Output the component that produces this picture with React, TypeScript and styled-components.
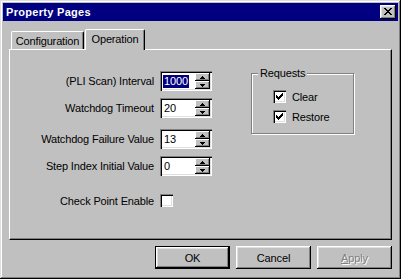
import React from "react";
import styled, { createGlobalStyle } from "styled-components";

const Global = createGlobalStyle`
  html, body { margin: 0; padding: 0; background: #c0c0c0; }
  body { font-family: "Liberation Sans", Arial, sans-serif; font-size: 11px; color: #000; letter-spacing: -0.15px; }
  * { box-sizing: border-box; }
`;

const Window = styled.div`
  width: 401px;
  height: 279px;
  background: #c0c0c0;
  padding: 3px;
  display: flex;
  flex-direction: column;
  box-shadow: inset -1px -1px #000, inset 1px 1px #dfdfdf, inset -2px -2px #808080, inset 2px 2px #fff;
`;

const TitleBar = styled.div`
  height: 18px;
  background: #000080;
  display: flex;
  align-items: center;
  justify-content: space-between;
  padding: 0 2px 0 3px;
`;

const TitleText = styled.span`
  color: #fff;
  font-weight: bold;
  font-size: 11px;
  letter-spacing: 0.3px;
`;

const CloseButton = styled.div`
  width: 16px;
  height: 14px;
  background: #c0c0c0;
  display: flex;
  align-items: center;
  justify-content: center;
  box-shadow: inset -1px -1px #000, inset 1px 1px #fff, inset -2px -2px #808080, inset 2px 2px #dfdfdf;
  padding-bottom: 1px;
`;

const Content = styled.div`
  flex: 1;
  display: flex;
  flex-direction: column;
  padding: 0 6px;
`;

const TabStrip = styled.div`
  display: flex;
  align-items: flex-end;
  height: 20px;
  margin-top: 8px;
  padding-left: 2px;
`;

const Tab = styled.div<{ $active?: boolean; $w: number }>`
  width: ${(p) => p.$w}px;
  height: ${(p) => (p.$active ? 21 : 18)}px;
  margin-bottom: ${(p) => (p.$active ? -1 : 0)}px;
  margin-left: ${(p) => (p.$active ? 1 : 0)}px;
  position: relative;
  z-index: ${(p) => (p.$active ? 1 : 0)};
  background: #c0c0c0;
  border-left: 1px solid #fff;
  border-top: 1px solid #fff;
  border-right: 1px solid #000;
  border-top-left-radius: 2px;
  border-top-right-radius: 2px;
  box-shadow: inset -1px 0 #808080;
  display: flex;
  align-items: ${(p) => (p.$active ? "flex-start" : "center")};
  padding-top: ${(p) => (p.$active ? 3 : 0)}px;
  justify-content: center;
  white-space: nowrap;
`;

const Panel = styled.div`
  height: 191px;
  background: #c0c0c0;
  border-top: 1px solid #fff;
  border-left: 1px solid #fff;
  border-right: 1px solid #000;
  border-bottom: 1px solid #000;
  box-shadow: inset -1px -1px #808080;
  display: flex;
`;

const FormColumn = styled.div`
  width: 241px;
  padding-top: 21px;
  display: flex;
  flex-direction: column;
`;

const FieldRow = styled.div<{ $top: number; $h: number }>`
  display: grid;
  grid-template-columns: 144px auto;
  column-gap: 6px;
  align-items: center;
  height: ${(p) => p.$h}px;
  margin-top: ${(p) => p.$top}px;
`;

const Label = styled.span`
  text-align: right;
  white-space: nowrap;
`;

const SpinEdit = styled.div`
  width: 52px;
  height: 20px;
  background: #fff;
  display: flex;
  align-items: center;
  padding: 2px 1px 2px 3px;
  box-shadow: inset 1px 1px #808080, inset 2px 2px #000, inset -1px -1px #fff, inset -2px -2px #dfdfdf;
`;

const EditValue = styled.span<{ $selected?: boolean }>`
  flex: 1;
  display: flex;
  align-items: center;
  & > span {
    padding: 0 1px;
    line-height: 13px;
    background: ${(p) => (p.$selected ? "#000080" : "transparent")};
    color: ${(p) => (p.$selected ? "#fff" : "#000")};
  }
`;

const SpinButtons = styled.div`
  width: 15px;
  height: 16px;
  margin-right: 1px;
  display: flex;
  flex-direction: column;
`;

const SpinButton = styled.div`
  flex: 1;
  background: #c0c0c0;
  display: flex;
  align-items: center;
  justify-content: center;
  box-shadow: inset -1px -1px #000, inset 1px 1px #fff, inset -2px -2px #808080;
`;

const CheckBox = styled.div`
  width: 13px;
  height: 13px;
  background: #fff;
  display: flex;
  align-items: center;
  justify-content: center;
  box-shadow: inset 1px 1px #808080, inset 2px 2px #000, inset -1px -1px #fff, inset -2px -2px #dfdfdf;
`;

const GroupBox = styled.div`
  position: relative;
  width: 103px;
  height: 61px;
  margin-top: 23px;
  border: 1px solid #808080;
  box-shadow: inset 1px 1px #fff, 1px 1px #fff;
  padding: 16px 0 0 21px;
  display: flex;
  flex-direction: column;
  gap: 7px;
`;

const Legend = styled.span`
  position: absolute;
  top: -7px;
  left: 6px;
  padding: 0 2px;
  line-height: 13px;
  background: #c0c0c0;
`;

const CheckRow = styled.div`
  display: flex;
  align-items: center;
  gap: 6px;
  height: 13px;
`;

const ButtonRow = styled.div`
  display: flex;
  justify-content: flex-end;
  gap: 6px;
  margin-top: 6px;
`;

const Button = styled.div<{ $default?: boolean; $disabled?: boolean }>`
  width: 75px;
  height: 23px;
  background: #c0c0c0;
  display: flex;
  align-items: center;
  justify-content: center;
  color: ${(p) => (p.$disabled ? "#808080" : "#000")};
  text-shadow: ${(p) => (p.$disabled ? "1px 1px #fff" : "none")};
  box-shadow: ${(p) =>
    p.$default
      ? "inset 0 0 0 1px #000, inset -2px -2px #000, inset 2px 2px #fff, inset -3px -3px #808080, inset 3px 3px #dfdfdf"
      : "inset -1px -1px #000, inset 1px 1px #fff, inset -2px -2px #808080, inset 2px 2px #dfdfdf"};
`;

const CloseGlyph = () => (
  <svg width="8" height="7" viewBox="0 0 8 7" shapeRendering="crispEdges">
    <rect x="0" y="0" width="2" height="1" fill="#000" />
    <rect x="6" y="0" width="2" height="1" fill="#000" />
    <rect x="1" y="1" width="2" height="1" fill="#000" />
    <rect x="5" y="1" width="2" height="1" fill="#000" />
    <rect x="2" y="2" width="4" height="1" fill="#000" />
    <rect x="3" y="3" width="2" height="1" fill="#000" />
    <rect x="2" y="4" width="4" height="1" fill="#000" />
    <rect x="1" y="5" width="2" height="1" fill="#000" />
    <rect x="5" y="5" width="2" height="1" fill="#000" />
    <rect x="0" y="6" width="2" height="1" fill="#000" />
    <rect x="6" y="6" width="2" height="1" fill="#000" />
  </svg>
);

const Arrow = ({ up }: { up?: boolean }) => (
  <svg width="5" height="3" viewBox="0 0 5 3" shapeRendering="crispEdges">
    {up ? (
      <>
        <rect x="2" y="0" width="1" height="1" fill="#000" />
        <rect x="1" y="1" width="3" height="1" fill="#000" />
        <rect x="0" y="2" width="5" height="1" fill="#000" />
      </>
    ) : (
      <>
        <rect x="0" y="0" width="5" height="1" fill="#000" />
        <rect x="1" y="1" width="3" height="1" fill="#000" />
        <rect x="2" y="2" width="1" height="1" fill="#000" />
      </>
    )}
  </svg>
);

const CheckMark = () => (
  <svg width="7" height="7" viewBox="0 0 7 7" shapeRendering="crispEdges">
    <rect x="6" y="0" width="1" height="1" fill="#000" />
    <rect x="5" y="1" width="2" height="1" fill="#000" />
    <rect x="0" y="2" width="1" height="1" fill="#000" />
    <rect x="4" y="2" width="3" height="1" fill="#000" />
    <rect x="0" y="3" width="2" height="1" fill="#000" />
    <rect x="3" y="3" width="3" height="1" fill="#000" />
    <rect x="0" y="4" width="5" height="1" fill="#000" />
    <rect x="1" y="5" width="3" height="1" fill="#000" />
    <rect x="2" y="6" width="1" height="1" fill="#000" />
  </svg>
);

const Spin = ({ value, selected }: { value: string; selected?: boolean }) => (
  <SpinEdit>
    <EditValue $selected={selected}>
      <span>{value}</span>
    </EditValue>
    <SpinButtons>
      <SpinButton>
        <Arrow up />
      </SpinButton>
      <SpinButton>
        <Arrow />
      </SpinButton>
    </SpinButtons>
  </SpinEdit>
);

const fields = [
  { label: "(PLI Scan) Interval", value: "1000", top: 0, selected: true },
  { label: "Watchdog Timeout", value: "20", top: 7 },
  { label: "Watchdog Failure Value", value: "13", top: 11 },
  { label: "Step Index Initial Value", value: "0", top: 7 },
];

export default function App() {
  return (
    <>
      <Global />
      <Window>
        <TitleBar>
          <TitleText>Property Pages</TitleText>
          <CloseButton>
            <CloseGlyph />
          </CloseButton>
        </TitleBar>
        <Content>
          <TabStrip>
            <Tab $w={73}>Configuration</Tab>
            <Tab $w={60} $active>
              Operation
            </Tab>
          </TabStrip>
          <Panel>
            <FormColumn>
              {fields.map((f) => (
                <FieldRow key={f.label} $top={f.top} $h={20}>
                  <Label>{f.label}</Label>
                  <Spin value={f.value} selected={f.selected} />
                </FieldRow>
              ))}
              <FieldRow $top={18} $h={13}>
                <Label>Check Point Enable</Label>
                <CheckBox />
              </FieldRow>
            </FormColumn>
            <GroupBox>
              <Legend>Requests</Legend>
              <CheckRow>
                <CheckBox>
                  <CheckMark />
                </CheckBox>
                <span>Clear</span>
              </CheckRow>
              <CheckRow>
                <CheckBox>
                  <CheckMark />
                </CheckBox>
                <span>Restore</span>
              </CheckRow>
            </GroupBox>
          </Panel>
          <ButtonRow>
            <Button $default>OK</Button>
            <Button>Cancel</Button>
            <Button $disabled>
              <span>
                <u>A</u>pply
              </span>
            </Button>
          </ButtonRow>
        </Content>
      </Window>
    </>
  );
}
